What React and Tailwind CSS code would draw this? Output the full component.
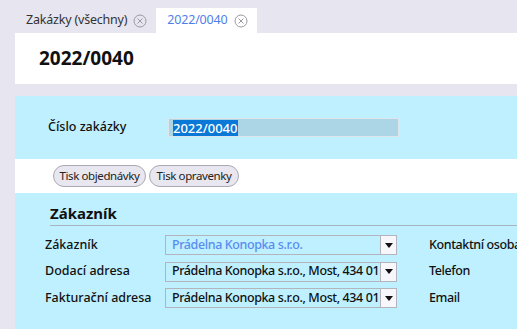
import React from "react";

function CloseIcon() {
  return (
    <svg width="14" height="14" viewBox="0 0 14 14" className="shrink-0">
      <circle cx="7" cy="7" r="6" fill="none" stroke="#9a9aa2" strokeWidth="1" />
      <path d="M4.5 4.5 L9.5 9.5 M9.5 4.5 L4.5 9.5" stroke="#9a9aa2" strokeWidth="1" />
    </svg>
  );
}

function Select({ value, blue }) {
  return (
    <div className="flex h-[20px] w-[232px] shrink-0 items-stretch border border-[#b4b4bc] bg-[#bff0ff]">
      <div
        className={
          "flex flex-1 items-center overflow-hidden whitespace-nowrap pl-[6px] text-[12.5px] font-medium tracking-[-0.4px] " +
          (blue ? "text-[#5a8cf0]" : "text-[#111]")
        }
      >
        {value}
      </div>
      <div className="flex w-[16px] shrink-0 items-center justify-center border-l border-[#b4b4bc] bg-[#f7f7fb]">
        <svg width="8" height="5" viewBox="0 0 8 5">
          <path d="M0 0 H8 L4 5 Z" fill="#111" />
        </svg>
      </div>
    </div>
  );
}

export default function App() {
  return (
    <div
      className="h-[329px] w-[517px] overflow-hidden bg-[#e7e5ef] pl-[15px] text-[#222]"
      style={{ fontFamily: '"Noto Sans", "DejaVu Sans", sans-serif' }}
    >
      {/* Tabs */}
      <div className="flex h-[33px] items-end">
        <div className="flex h-[25px] items-center gap-[6px] pl-[11px] pr-[9px] text-[12.5px] tracking-[-0.2px] text-[#333]">
          <span>Zakázky (všechny)</span>
          <CloseIcon />
        </div>
        <div className="flex h-[25px] items-center gap-[7px] bg-white pl-[11px] pr-[9px] text-[12.5px] tracking-[-0.2px] text-[#4f7fe9]">
          <span>2022/0040</span>
          <CloseIcon />
        </div>
      </div>

      {/* Header */}
      <div className="flex h-[51px] items-center bg-white pl-[24px]">
        <h1 className="text-[19px] font-bold text-[#111]">2022/0040</h1>
      </div>

      <div className="h-[12px]" />

      {/* Number panel */}
      <div className="flex h-[63px] items-center bg-[#bff0ff] pl-[33px]">
        <div className="w-[120px] shrink-0 text-[12.5px] font-medium text-[#111]">Číslo zakázky</div>
        <div className="flex h-[19px] w-[231px] items-center border border-[#dde6ea] bg-[#acd6e6] pl-[4px]">
          <span className="bg-[#0a78d7] text-[13px] font-medium leading-[16px] text-white">2022/0040</span>
        </div>
      </div>

      {/* Buttons */}
      <div className="flex h-[34px] items-center gap-[3px] bg-white pl-[38px]">
        <button className="h-[22px] w-[93px] rounded-full border border-[#a9a9b3] bg-[#e8e6ee] text-[11.5px] tracking-[-0.4px] text-[#222]">
          Tisk objednávky
        </button>
        <button className="h-[22px] w-[90px] rounded-full border border-[#a9a9b3] bg-[#e8e6ee] text-[11.5px] tracking-[-0.4px] text-[#222]">
          Tisk opravenky
        </button>
      </div>

      {/* Customer panel */}
      <div className="h-[136px] bg-[#bff0ff] pl-[30px] pt-[10px]">
        <div className="ml-[5px] border-b border-[#a8b4bc] pb-[2px]">
          <h2 className="text-[15px] font-bold leading-[20px] text-[#111]">Zákazník</h2>
        </div>
        <div className="mt-[9px] flex flex-col gap-[6.5px]">
          {[
            ["Zákazník", "Prádelna Konopka s.r.o.", true, "Kontaktní osoba"],
            ["Dodací adresa", "Prádelna Konopka s.r.o., Most, 434 01", false, "Telefon"],
            ["Fakturační adresa", "Prádelna Konopka s.r.o., Most, 434 01", false, "Email"],
          ].map(([label, value, blue, right]) => (
            <div key={label} className="flex h-[20px] items-center">
              <div className="w-[120px] shrink-0 text-[12.5px] font-medium text-[#111]">{label}</div>
              <Select value={value} blue={blue} />
              <div className="ml-[32px] whitespace-nowrap text-[12.5px] font-medium tracking-[-0.4px] text-[#111]">{right}</div>
            </div>
          ))}
        </div>
      </div>
    </div>
  );
}
